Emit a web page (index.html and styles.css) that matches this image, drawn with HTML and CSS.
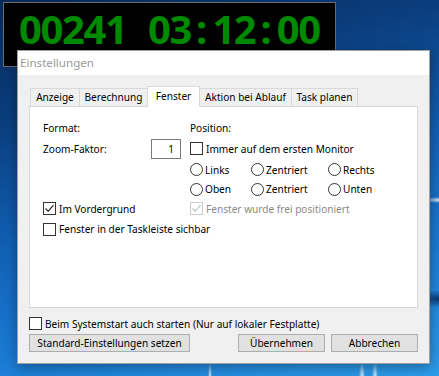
FILE: index.html
```html
<!DOCTYPE html>
<html lang="de">

<head>
    <meta charset="UTF-8">
    <meta name="viewport" content="width=device-width, initial-scale=1.0">
    <title>Einstellungen</title>
    <link rel="stylesheet" href="styles.css">
</head>

<body>
    <div class="desktop">
        <div class="clock">
            <div class="clock__digits">00241<span class="sep"> </span>03<span class="sep">:</span>12<span class="sep">:</span>00</div>
        </div>

        <div class="dialog">
            <div class="titlebar">Einstellungen</div>
            <div class="dialog__body">
                <div class="tabs">
                    <div class="tab tab--anzeige">Anzeige</div>
                    <div class="tab tab--berechnung">Berechnung</div>
                    <div class="tab tab--fenster tab--active">Fenster</div>
                    <div class="tab tab--aktion">Aktion bei Ablauf</div>
                    <div class="tab tab--task">Task planen</div>
                </div>

                <div class="panel">
                    <div class="row row--1">
                        <div class="col1">Format:</div>
                        <div class="col2">Position:</div>
                    </div>
                    <div class="row row--2">
                        <div class="col1">
                            <span class="zoom-label">Zoom-Faktor:</span>
                            <span class="field">1</span>
                        </div>
                        <div class="col2">
                            <span class="box"></span>Immer auf dem ersten Monitor
                        </div>
                    </div>
                    <div class="row row--3">
                        <div class="col1"></div>
                        <div class="col2">
                            <span class="radio radio--a"><span class="dot"></span>Links</span>
                            <span class="radio radio--b"><span class="dot"></span>Zentriert</span>
                            <span class="radio"><span class="dot"></span>Rechts</span>
                        </div>
                    </div>
                    <div class="row row--4">
                        <div class="col1"></div>
                        <div class="col2">
                            <span class="radio radio--a"><span class="dot"></span>Oben</span>
                            <span class="radio radio--b"><span class="dot"></span>Zentriert</span>
                            <span class="radio"><span class="dot"></span>Unten</span>
                        </div>
                    </div>
                    <div class="row row--5">
                        <div class="col1">
                            <span class="box">
                                <svg width="11" height="11" viewBox="0 0 11 11"><path d="M1.5 5.5 L4.2 8.2 L9.5 2.2" fill="none" stroke="#222" stroke-width="1.1"/></svg>
                            </span>Im Vordergrund
                        </div>
                        <div class="col2 disabled">
                            <span class="box box--disabled">
                                <svg width="11" height="11" viewBox="0 0 11 11"><path d="M1.5 5.5 L4.2 8.2 L9.5 2.2" fill="none" stroke="#bcbcbc" stroke-width="1.1"/></svg>
                            </span>Fenster wurde frei positioniert
                        </div>
                    </div>
                    <div class="row row--6">
                        <div class="col1 wide">
                            <span class="box"></span>Fenster in der Taskleiste sichbar
                        </div>
                    </div>
                </div>

                <div class="startup">
                    <span class="box"></span>Beim Systemstart auch starten (Nur auf lokaler Festplatte)
                </div>

                <div class="buttons">
                    <button class="btn btn--wide">Standard-Einstellungen setzen</button>
                    <span class="spacer"></span>
                    <button class="btn">Übernehmen</button>
                    <button class="btn btn--last">Abbrechen</button>
                </div>
            </div>
        </div>
    </div>
</body>

</html>
```

FILE: styles.css
```css
* {
    box-sizing: border-box;
    margin: 0;
    padding: 0;
}

body {
    width: 439px;
    height: 376px;
    overflow: hidden;
    font-family: "Noto Sans", "Liberation Sans", sans-serif;
    font-size: 10.1px;
    color: #000;
}

.desktop {
    position: relative;
    width: 439px;
    height: 376px;
    overflow: hidden;
    background:
        radial-gradient(16px 3px at 100% 200px, rgba(255, 255, 255, 0.85), rgba(255, 255, 255, 0)),
        radial-gradient(22px 9px at 100% 299px, rgba(8, 48, 108, 0.95), rgba(8, 48, 108, 0)),
        radial-gradient(2px 14px at 210px 376px, rgba(255, 255, 255, 0.8), rgba(255, 255, 255, 0)),
        radial-gradient(3px 14px at 362px 376px, rgba(255, 255, 255, 0.8), rgba(255, 255, 255, 0)),
        radial-gradient(3px 14px at 375px 376px, rgba(255, 255, 255, 0.8), rgba(255, 255, 255, 0)),
        linear-gradient(165deg, #072958 0%, #0b3e7e 25%, #1160b4 50%, #1c7dd6 75%, #2c9ce9 100%);
}

/* clock window */
.clock {
    position: absolute;
    left: 3px;
    top: 2px;
    width: 333px;
    height: 65px;
    background: #000;
    border: 1px solid #6a6a6a;
}

.clock__digits {
    display: flex;
    margin: 4px 0 0 15px;
    font-family: "Noto Sans", sans-serif;
    font-weight: bold;
    font-size: 40px;
    line-height: 44px;
    letter-spacing: -1.4px;
    color: #008a00;
    white-space: pre;
}

.sep {
    width: 21.5px;
    text-align: center;
    letter-spacing: 0;
}

/* dialog window */
.dialog {
    position: absolute;
    left: 17px;
    top: 50px;
    width: 413px;
    height: 314px;
    display: flex;
    flex-direction: column;
    background: #f0f0f0;
    border: 1px solid #a0a0a0;
    box-shadow: 0 3px 12px rgba(0, 0, 0, 0.35);
}

.titlebar {
    height: 24px;
    background: #fff;
    color: #999;
    font-size: 11.6px;
    line-height: 24px;
    padding-left: 2px;
}

.dialog__body {
    flex: 1;
    padding: 11px 11px 0;
}

.tabs {
    display: flex;
    align-items: flex-end;
    height: 20px;
    padding-left: 1px;
}

.tab {
    height: 18px;
    border: 1px solid #d9d9d9;
    border-bottom: none;
    background: #f0f0f0;
    text-align: center;
    line-height: 17px;
    white-space: nowrap;
}

.tab + .tab {
    margin-left: -1px;
}

.tab--anzeige { width: 50px; }
.tab--berechnung { width: 69px; }
.tab--fenster { width: 53px; }
.tab--aktion { width: 93px; }
.tab--task { width: 67px; }

.tab--active {
    position: relative;
    z-index: 1;
    height: 21px;
    margin-bottom: -1px;
    background: #fff;
    line-height: 19px;
}

.panel {
    height: 202px;
    background: #fff;
    border: 1px solid #d9d9d9;
    padding: 11px 0 0 13px;
}

.row {
    display: flex;
    align-items: center;
}

.row--1 { height: 20px; }
.row--2 { height: 21px; }
.row--3 { height: 21px; }
.row--4 { height: 18px; }
.row--5 { height: 21px; }
.row--6 { height: 20px; }

.col1 {
    width: 147px;
    display: flex;
    align-items: center;
    white-space: nowrap;
}

.col1.wide {
    width: auto;
}

.col2 {
    display: flex;
    align-items: center;
    white-space: nowrap;
}

.zoom-label {
    width: 108px;
}

.field {
    width: 30px;
    height: 20px;
    border: 1px solid #7a7a7a;
    background: #fff;
    text-align: right;
    padding-right: 6px;
    line-height: 18px;
}

.box {
    flex: none;
    width: 13px;
    height: 13px;
    margin-right: 3px;
    border: 1px solid #333;
    background: #fff;
    display: flex;
    align-items: center;
    justify-content: center;
}

.box--disabled {
    border-color: #cccccc;
}

.disabled {
    color: #8a8a8a;
}

.radio {
    display: flex;
    align-items: center;
}

.radio--a { width: 61px; }
.radio--b { width: 77px; }

.dot {
    flex: none;
    width: 13px;
    height: 13px;
    margin-right: 2px;
    border: 1px solid #333;
    border-radius: 50%;
    background: #fff;
}

.startup {
    margin-top: 9px;
    height: 13px;
    display: flex;
    align-items: center;
    white-space: nowrap;
}

.buttons {
    margin-top: 4px;
    display: flex;
}

.btn {
    width: 87px;
    height: 18px;
    border: 1px solid #adadad;
    background: #e1e1e1;
    font: inherit;
    color: #000;
    line-height: 16px;
}

.btn--wide {
    width: 161px;
}

.btn--last {
    margin-left: 6px;
}

.spacer {
    flex: 1;
}
```
